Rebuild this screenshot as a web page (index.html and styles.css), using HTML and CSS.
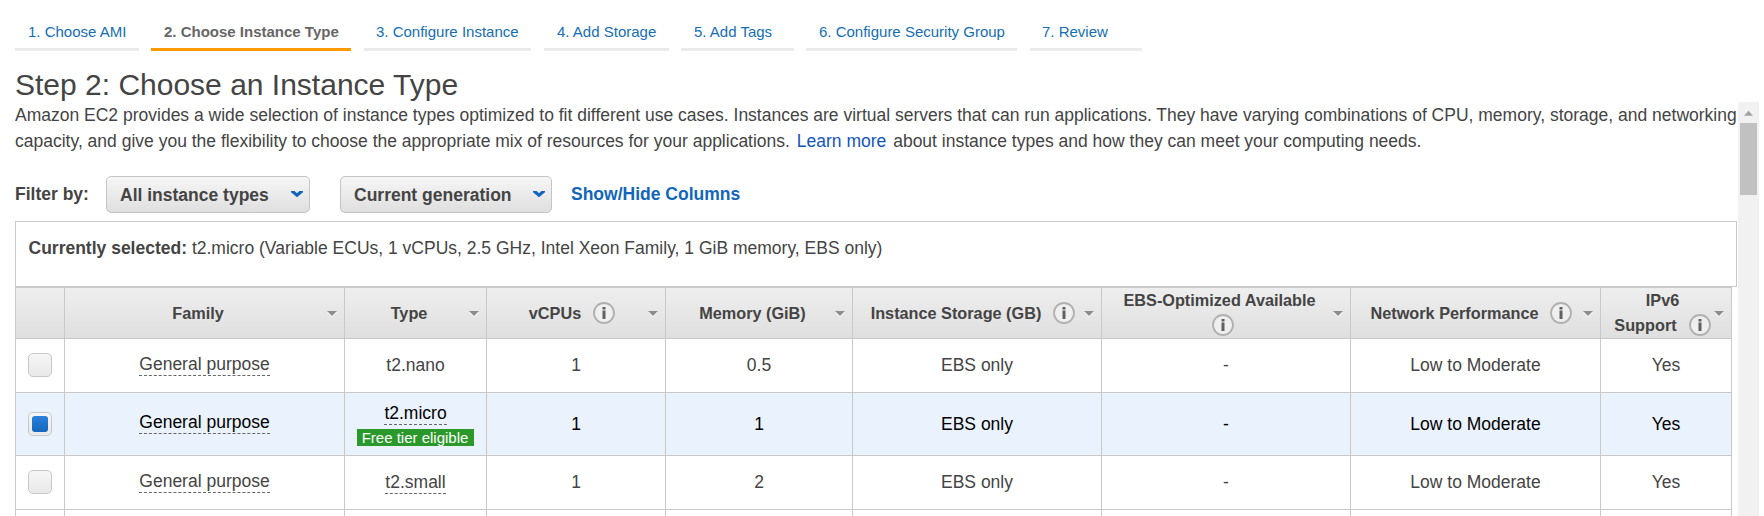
FILE: index.html
```html
<!DOCTYPE html>
<html lang="en">
<head>
<meta charset="utf-8">
<title>Step 2: Choose an Instance Type</title>
<link rel="stylesheet" href="styles.css">
</head>
<body>
<svg class="defs" width="0" height="0">
  <symbol id="info" viewBox="0 0 22 22">
    <circle cx="11" cy="11" r="10" fill="#efefef" stroke="#b0b0b0" stroke-width="1.8"/>
    <path d="M9.5 5h3v2.4h-3zM9.5 8.6h3v8.4h-3z" fill="#606060"/>
  </symbol>
  <symbol id="sort" viewBox="0 0 10 6">
    <path d="M0 1h10L5 6z" fill="#fff"/>
    <path d="M0 0h10L5 5z" fill="#8c8c8c"/>
  </symbol>
  <symbol id="chevron" viewBox="0 0 12 8">
    <path d="M0 1H3.6L6 3.2L8.4 1H12V2.2L6 7.2L0 2.2z" fill="#1166bb"/>
  </symbol>
</svg>
<nav class="steps">
  <a class="step s1">1. Choose AMI</a>
  <a class="step s2 active">2. Choose Instance Type</a>
  <a class="step s3">3. Configure Instance</a>
  <a class="step s4">4. Add Storage</a>
  <a class="step s5">5. Add Tags</a>
  <a class="step s6">6. Configure Security Group</a>
  <a class="step s7">7. Review</a>
</nav>
<h1 class="title">Step 2: Choose an Instance Type</h1>
<div class="body">
  <main class="content">
    <p class="intro">
      <span class="line first">Amazon EC2 provides a wide selection of instance types optimized to fit different use cases. Instances are virtual servers that can run applications. They have varying combinations of CPU, memory, storage, and networking</span>
      <span class="line second">capacity, and give you the flexibility to choose the appropriate mix of resources for your applications. <a class="learn">Learn more</a> about instance types and how they can meet your computing needs.</span>
    </p>
    <div class="filters">
      <span class="filter-label">Filter by:</span>
      <div class="select types"><span>All instance types</span><svg class="chevron"><use href="#chevron"/></svg></div>
      <div class="select generation"><span>Current generation</span><svg class="chevron"><use href="#chevron"/></svg></div>
      <a class="columns-link">Show/Hide Columns</a>
    </div>
    <div class="selected-box"><b>Currently selected:</b> t2.micro (Variable ECUs, 1 vCPUs, 2.5 GHz, Intel Xeon Family, 1 GiB memory, EBS only)</div>
    <div class="table">
      <div class="row head">
        <div class="cell"></div>
        <div class="cell"><span class="label">Family</span><svg class="sort"><use href="#sort"/></svg></div>
        <div class="cell"><span class="label">Type</span><svg class="sort"><use href="#sort"/></svg></div>
        <div class="cell"><span class="label with-info">vCPUs<svg class="info"><use href="#info"/></svg></span><svg class="sort"><use href="#sort"/></svg></div>
        <div class="cell"><span class="label">Memory (GiB)</span><svg class="sort"><use href="#sort"/></svg></div>
        <div class="cell"><span class="label with-info">Instance Storage (GB)<svg class="info"><use href="#info"/></svg></span><svg class="sort"><use href="#sort"/></svg></div>
        <div class="cell"><span class="label stacked">EBS-Optimized Available<span class="sub"><svg class="info"><use href="#info"/></svg></span></span><svg class="sort"><use href="#sort"/></svg></div>
        <div class="cell"><span class="label with-info">Network Performance<svg class="info"><use href="#info"/></svg></span><svg class="sort"><use href="#sort"/></svg></div>
        <div class="cell"><span class="label stacked ipv6">IPv6<span class="sub">Support<svg class="info"><use href="#info"/></svg></span></span><svg class="sort"><use href="#sort"/></svg></div>
      </div>
      <div class="row">
        <div class="cell"><span class="check"></span></div>
        <div class="cell"><span class="hint family">General purpose</span></div>
        <div class="cell">t2.nano</div>
        <div class="cell">1</div>
        <div class="cell">0.5</div>
        <div class="cell">EBS only</div>
        <div class="cell">-</div>
        <div class="cell">Low to Moderate</div>
        <div class="cell">Yes</div>
      </div>
      <div class="row selected">
        <div class="cell"><span class="check"><span class="mark"></span></span></div>
        <div class="cell"><span class="hint family">General purpose</span></div>
        <div class="cell type"><span class="hint">t2.micro</span><span class="badge">Free tier eligible</span></div>
        <div class="cell">1</div>
        <div class="cell">1</div>
        <div class="cell">EBS only</div>
        <div class="cell">-</div>
        <div class="cell">Low to Moderate</div>
        <div class="cell">Yes</div>
      </div>
      <div class="row">
        <div class="cell"><span class="check"></span></div>
        <div class="cell"><span class="hint family">General purpose</span></div>
        <div class="cell"><span class="hint small">t2.small</span></div>
        <div class="cell">1</div>
        <div class="cell">2</div>
        <div class="cell">EBS only</div>
        <div class="cell">-</div>
        <div class="cell">Low to Moderate</div>
        <div class="cell">Yes</div>
      </div>
      <div class="row partial">
        <div class="cell"></div><div class="cell"></div><div class="cell"></div><div class="cell"></div><div class="cell"></div><div class="cell"></div><div class="cell"></div><div class="cell"></div><div class="cell"></div>
      </div>
    </div>
  </main>
  <div class="scrollbar">
    <svg class="up" viewBox="0 0 10 6"><path d="M0 6L5 0.5L10 6z" fill="#a3a3a3"/></svg>
    <div class="thumb"></div>
  </div>
</div>
</body>
</html>
```
FILE: styles.css
```css
* { box-sizing: border-box; }
html, body { height: 516px; overflow: hidden; }
body {
  margin: 0;
  background: #fff;
  color: #444;
  font: 17.5px/26px "Liberation Sans", Arial, sans-serif;
  display: flex;
  flex-direction: column;
}
.defs { position: absolute; }
svg { flex: none; display: block; }

.steps { display: flex; height: 51px; flex: none; padding: 14px 0 0 15px; }
.step {
  height: 37px;
  padding-left: 13px;
  border-bottom: 3px solid #eaeaea;
  font-size: 15px;
  line-height: 36px;
  color: #146eb4;
  white-space: nowrap;
}
.step.active { color: #666; font-weight: bold; border-color: #ff9900; }
.s1 { width: 124px; margin-right: 12px; }
.s2 { width: 200px; margin-right: 13px; }
.s3 { width: 167px; margin-right: 13px; padding-left: 12px; }
.s4 { width: 125px; margin-right: 12px; }
.s5 { width: 113px; margin-right: 12px; }
.s6 { width: 211px; margin-right: 13px; }
.s7 { width: 112px; padding-left: 12px; }

.title {
  flex: none;
  margin: 0;
  height: 51px;
  padding: 17px 0 0 15px;
  font-size: 30px;
  font-weight: normal;
  line-height: 34px;
}

.body { display: flex; flex: 1; min-height: 0; }
.content { width: 1738px; padding-left: 15px; }
.intro { margin: 0; height: 74px; }
.line { display: block; white-space: nowrap; }
.learn { color: #1155bb; margin: 0 2px; }

.filters { display: flex; height: 37px; line-height: 36px; font-weight: bold; white-space: nowrap; }
.filter-label { width: 91px; }
.select {
  display: flex;
  align-items: center;
  justify-content: space-between;
  height: 37px;
  padding: 1px 6px 0 13px;
  border: 1px solid #c4c4c4;
  border-radius: 5px;
  background: linear-gradient(#f6f6f6, #dfdfdf);
}
.types { width: 204px; margin-right: 30px; }
.generation { width: 212px; margin-right: 19px; }
.chevron { width: 12px; height: 8px; margin-bottom: 3px; }
.columns-link { color: #1166bb; }

.selected-box {
  margin-top: 8px;
  width: 1722px;
  height: 66px;
  border: 1px solid #c9c9c9;
  padding: 13px 0 0 12.5px;
  white-space: nowrap;
}

.table { width: 1717px; border-top: 1px solid #c9c9c9; border-right: 1px solid #c9c9c9; }
.row {
  display: grid;
  grid-template-columns: 49px 280px 142px 179px 187px 249px 249px 250px 131px;
  height: 54px;
  border-bottom: 1px solid #c9c9c9;
}
.cell {
  display: flex;
  align-items: center;
  justify-content: center;
  padding-bottom: 2px;
  border-left: 1px solid #c9c9c9;
  white-space: nowrap;
}
.head { height: 51px; background: linear-gradient(#eee, #dfdfdf); font-size: 16.25px; font-weight: bold; }
.head .cell { padding: 0 7px 0 0; }
.label { flex: 1; display: flex; justify-content: center; align-items: center; min-width: 0; padding: 0 0 2px 3px; }
.with-info { gap: 12px; padding-left: 8px; }
.stacked { flex-direction: column; line-height: 25px; }
.sub { display: flex; align-items: center; gap: 12px; height: 24px; padding-left: 7px; }
.ipv6 { padding-left: 9px; }
.ipv6 .sub { padding-left: 0; }
.info { width: 22px; height: 22px; }
.sort { width: 10px; height: 6px; margin-left: -1px; }

.selected { height: 63px; background: #eaf2fe; color: #000; }
.selected .cell { padding-bottom: 0; }
.hint { line-height: 20px; height: 22px; border-bottom: 1px dashed #666; }
.family { margin-bottom: -1px; }
.selected .family { margin-bottom: 3px; }
.small { margin-bottom: -2px; }
.selected .type { flex-direction: column; padding-top: 1px; }
.badge {
  margin-top: 4px;
  width: 117px;
  height: 17px;
  padding-right: 1px;
  background: #2b982b;
  color: #fff;
  font-size: 15px;
  line-height: 18px;
  text-align: center;
}
.check {
  display: grid;
  place-items: center;
  width: 24px;
  height: 24px;
  margin-right: 1px;
  border: 1px solid #c8c8c8;
  border-radius: 5px;
  background: linear-gradient(#f5f5f5, #e9e9e9);
}
.mark { width: 16px; height: 16px; border-radius: 3px; background: linear-gradient(#2a80dc, #1266bb); }
.partial { border-bottom: 0; height: 7px; }

.scrollbar { width: 21px; background: #f1f1f1; display: flex; flex-direction: column; align-items: center; }
.up { width: 9px; height: 6px; margin: 8px 0 7px; }
.thumb { width: 17px; height: 72px; background: #c1c1c1; }
```
